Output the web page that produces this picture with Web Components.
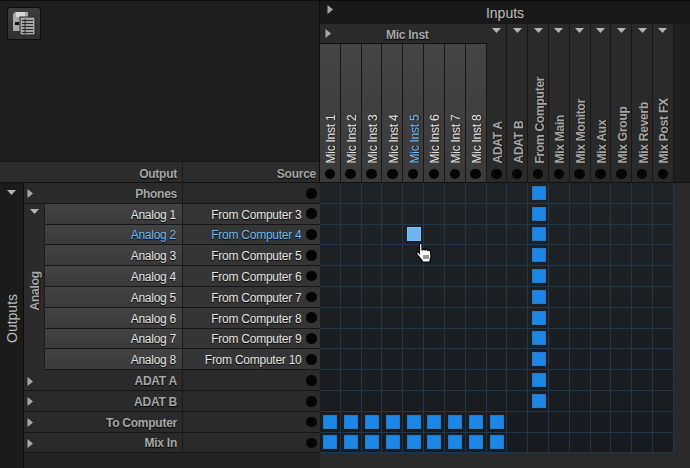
<!DOCTYPE html>
<html>
<head>
<meta charset="utf-8">
<title>Routing Matrix</title>
<style>
  html, body { margin: 0; padding: 0; background: #2a2a2a; overflow: hidden; }
  body { font-family: "Liberation Sans", Arial, sans-serif; }
</style>
</head>
<body>
<routing-matrix></routing-matrix>
<script>
function mkTmplt(innerHtml) {
    var tmplt = document.createElement("template");
    tmplt.innerHTML = innerHtml;
    return tmplt;
}

const TRI_RIGHT = `<svg width="6" height="9" viewBox="0 0 6 9"><path d="M.5 0 6 4.5.5 9z" fill="#a8a8a8"/></svg>`;
const TRI_DOWN = `<svg width="9" height="5" viewBox="0 0 9 5"><path d="M0 0h9L4.5 5z" fill="#b4b4b4"/></svg>`;

class PresetButton extends HTMLElement {
    constructor() {
        super();
        this.attachShadow({ mode: "open" }).append(PresetButton._tmplt.content.cloneNode(true));
    }
}
PresetButton._tmplt = mkTmplt(`
    <style>
        :host { display: flex; width: 34px; height: 33px; box-sizing: border-box; align-items: center; justify-content: center;
            background: linear-gradient(#3e3e3e, #303030); border: 1px solid #0c0c0c; border-radius: 3px; }
    </style>
    <svg width="24" height="25" viewBox="0 0 24 25">
        <path d="M1 3.500 3 1h13v5H8v14H1z" fill="#a9a9a9"/>
        <rect x="4" y="1" width="9" height="5" fill="#d8d8d8"/>
        <rect x="3" y="11" width="4" height="3" fill="#111"/>
        <rect x="8" y="6" width="15" height="18" fill="#a5a5a5" stroke="#222" stroke-width="1"/>
        <path d="M10 9.500h11M10 12.500h11M10 15.500h11M10 18.500h11M10 21.500h11M13 8v15" stroke="#2a2a2a" stroke-width="1" fill="none"/>
    </svg>
`);

class CornerPanel extends HTMLElement {
    constructor() {
        super();
        this.attachShadow({ mode: "open" }).append(CornerPanel._tmplt.content.cloneNode(true));
    }
}
CornerPanel._tmplt = mkTmplt(`
    <style>
        :host { display: flex; flex-direction: column; height: 183px; border-right: 1px solid #0e0e0e; box-sizing: border-box; background: #1f1f1f; }
        #top { height: 162px; box-sizing: border-box; padding: 7px; border-bottom: 1px solid #161616; box-shadow: inset 0 1px #0c0c0c; }
        #heads { display: flex; height: 21px; box-sizing: border-box; background: #2c2c2c; border-bottom: 1px solid #121212;
            font: bold 12px "Liberation Sans", Arial, sans-serif; letter-spacing: -0.25px; color: #a6a6a6; text-shadow: 0 1px 1px #000; }
        #heads div { display: flex; align-items: center; justify-content: flex-end; box-sizing: border-box; padding-top: 3px; }
        #out { width: 183px; padding-right: 5px; border-right: 1px solid #1a1a1a; }
        #src { flex: 1; padding-right: 3px; }
    </style>
    <div id="top"><preset-button></preset-button></div>
    <div id="heads"><div id="out">Output</div><div id="src">Source</div></div>
`);

class InputColumn extends HTMLElement {
    constructor() {
        super();
        this.attachShadow({ mode: "open" }).append(InputColumn._tmplt.content.cloneNode(true));
        this.shadowRoot.querySelector("#arrow").innerHTML = this.hasAttribute("group") ? TRI_DOWN : "";
    }
}
InputColumn._tmplt = mkTmplt(`
    <style>
        :host { display: flex; flex-direction: column; align-items: center; width: 20.82px; box-sizing: border-box; height: 100%;
            background: linear-gradient(#454545, #3a3a3a); border-right: 1px solid #161616; color: #e6e6e6;
            font: 12px "Liberation Sans", Arial, sans-serif; letter-spacing: -0.25px; text-shadow: 0 1px 1px #000; }
        :host([group]) { background: #2a2a2a; color: #a8a8a8; font-weight: bold; }
        :host([active]) { color: #72bcf8; }
        #arrow { height: 9px; padding-top: 4px; line-height: 0; flex: none; }
        #label { flex: 1; min-height: 0; display: flex; align-items: center; justify-content: flex-start; writing-mode: vertical-rl;
            transform: translateX(1.5px) rotate(180deg); white-space: nowrap; padding-top: 5px; line-height: 19px; }
        #dot { width: 10.5px; height: 10.5px; border-radius: 50%; background: #050505; margin: 0 0 3px; flex: none; }
    </style>
    <div id="arrow"></div>
    <div id="label"><slot></slot></div>
    <div id="dot"></div>
`);

class InputsHeader extends HTMLElement {
    constructor() {
        super();
        this.attachShadow({ mode: "open" }).append(InputsHeader._tmplt.content.cloneNode(true));
        this.shadowRoot.querySelectorAll(".tri").forEach(t => { t.innerHTML = TRI_RIGHT; });
    }
}
InputsHeader._tmplt = mkTmplt(`
    <style>
        :host { display: flex; flex-direction: column; height: 183px; background: #1f1f1f; box-sizing: border-box; border-bottom: 1px solid #111; }
        #title { position: relative; height: 24px; flex: none; display: flex; align-items: center; justify-content: center; background: #191919;
            color: #bdbdbd; font: 14px "Liberation Sans", Arial, sans-serif; box-sizing: border-box; padding-top: 2px; box-shadow: inset 0 1px #0c0c0c; }
        .tri { line-height: 0; }
        #title .tri { position: absolute; left: 7px; top: 5px; }
        #cols { flex: 1; min-height: 0; display: flex; }
        #mic { display: flex; flex-direction: column; flex: none; }
        #micHead { height: 20px; flex: none; display: flex; align-items: center; background: #2a2a2a; border-bottom: 1px solid #111;
            color: #a8a8a8; font: bold 12px "Liberation Sans", Arial, sans-serif; letter-spacing: -0.25px; position: relative; justify-content: center; box-sizing: border-box;
            padding: 2px 0 0 8px; text-shadow: 0 1px 1px #000; }
        #micHead .tri { position: absolute; left: 5px; top: 5px; }
        #micCols { flex: 1; min-height: 0; display: flex; }
        #rest { display: flex; flex: none; }
    </style>
    <div id="title"><span class="tri"></span><span>Inputs</span></div>
    <div id="cols">
        <div id="mic">
            <div id="micHead"><span class="tri"></span>Mic Inst</div>
            <div id="micCols"><slot name="mic"></slot></div>
        </div>
        <div id="rest"><slot name="rest"></slot></div>
    </div>
`);

class OutputRow extends HTMLElement {
    constructor() {
        super();
        this.attachShadow({ mode: "open" }).append(OutputRow._tmplt.content.cloneNode(true));
        const s = this.shadowRoot;
        s.querySelector("#name").textContent = this.getAttribute("name");
        s.querySelector("#source").textContent = this.getAttribute("source") || "";
        if (this.hasAttribute("group")) {
            s.querySelector("#arrow").innerHTML = TRI_RIGHT;
        } else {
            s.querySelector("#arrow").remove();
        }
    }
}
OutputRow._tmplt = mkTmplt(`
    <style>
        :host { display: flex; height: 20.8px; box-sizing: border-box; color: #e6e6e6; font: 12px "Liberation Sans", Arial, sans-serif;
            letter-spacing: -0.25px; text-shadow: 0 1px 1px #000; border-bottom: 1px solid #161616; background: #353535; }
        :host([group]) { background: #2a2a2a; color: #a8a8a8; font-weight: bold; }
        :host([active]) { color: #72bcf8; }
        #nameCell { display: flex; align-items: center; flex: 1; min-width: 0; box-sizing: border-box; padding-right: 6px;
            background: linear-gradient(#434343, #3a3a3a); border-right: 1px solid #1a1a1a; }
        :host([group]) #nameCell { background: #2a2a2a; padding-right: 5px; }
        #arrow { line-height: 0; margin-left: 3px; padding-top: 2px; }
        #name { margin-left: auto; padding-top: 2px; }
        #srcCell { display: flex; align-items: center; justify-content: flex-end; width: 137px; flex: none; box-sizing: border-box; padding-right: 3.500px; }
        :host([group]) #srcCell { padding-top: 1px; }
        #source { margin-right: 4.500px; padding-top: 2px; }
        #dot { width: 10.5px; height: 10.5px; border-radius: 50%; background: #050505; flex: none; }
    </style>
    <div id="nameCell"><span id="arrow"></span><span id="name"></span></div>
    <div id="srcCell"><span id="source"></span><span id="dot"></span></div>
`);

class OutputGroup extends HTMLElement {
    constructor() {
        super();
        this.attachShadow({ mode: "open" }).append(OutputGroup._tmplt.content.cloneNode(true));
        this.shadowRoot.querySelector("#arrow").innerHTML = TRI_DOWN;
    }
}
OutputGroup._tmplt = mkTmplt(`
    <style>
        :host { display: flex; }
        #side { width: 21px; flex: none; box-sizing: border-box; background: #2b2b2b; display: flex; flex-direction: column; align-items: center; border-right: 1px solid #1c1c1c; }
        #arrow { height: 9px; padding-top: 5px; line-height: 0; flex: none; }
        #label { flex: 1; display: flex; align-items: center; justify-content: center; writing-mode: vertical-rl; transform: translateX(1px) rotate(180deg);
            color: #a8a8a8; font: bold 12px "Liberation Sans", Arial, sans-serif; letter-spacing: -0.25px; text-shadow: 0 1px 1px #000; padding-top: 7px; }
        #rows { flex: 1; min-width: 0; }
    </style>
    <div id="side"><div id="arrow"></div><div id="label">Analog</div></div>
    <div id="rows"><slot></slot></div>
`);

class OutputsPanel extends HTMLElement {
    constructor() {
        super();
        this.attachShadow({ mode: "open" }).append(OutputsPanel._tmplt.content.cloneNode(true));
        this.shadowRoot.querySelector("#arrow").innerHTML = TRI_DOWN;
    }
}
OutputsPanel._tmplt = mkTmplt(`
    <style>
        :host { display: flex; height: 285px; background: #232323; }
        #side { width: 24px; flex: none; box-sizing: border-box; background: #1b1b1b; border-right: 1px solid #0c0c0c; display: flex; flex-direction: column; align-items: center; }
        #arrow { height: 9px; padding: 7px 1px 0 0; line-height: 0; flex: none; }
        #label { flex: 1; display: flex; align-items: center; justify-content: center; writing-mode: vertical-rl; transform: rotate(180deg);
            color: #bdbdbd; font: 14px "Liberation Sans", Arial, sans-serif; padding-top: 30px; }
        #rows { flex: 1; min-width: 0; }
    </style>
    <div id="side"><div id="arrow"></div><div id="label">Outputs</div></div>
    <div id="rows"><slot></slot></div>
`);

class MatrixCell extends HTMLElement {
    constructor() {
        super();
        this.attachShadow({ mode: "open" }).append(MatrixCell._tmplt.content.cloneNode(true));
    }
}
MatrixCell._tmplt = mkTmplt(`
    <style>
        :host { display: flex; align-items: center; justify-content: center; box-sizing: border-box; border-right: 1px solid #1f384e; border-bottom: 1px solid #1f384e; }
        #sq { display: none; width: 14px; height: 14px; box-sizing: border-box; background: #1c87e6; border: 1px solid #2a78c0; box-shadow: 0 0 0 1px #14202c; margin: 0 0 0 1px; }
        :host([on]) #sq { display: block; }
        :host([hot]) #sq { display: block; background: #6fb4ef; border-color: #80bdf0; }
    </style>
    <div id="sq"></div>
`);

class MatrixGrid extends HTMLElement {
    constructor() {
        super();
        this.attachShadow({ mode: "open" }).append(MatrixGrid._tmplt.content.cloneNode(true));
        const grid = this.shadowRoot.querySelector("#grid");
        for (let r = 0; r < 13; r++) {
            for (let c = 0; c < 17; c++) {
                const cell = document.createElement("matrix-cell");
                if (c === 10 && r <= 10) cell.setAttribute("on", "");
                if (r >= 11 && c <= 8) cell.setAttribute("on", "");
                if (r === 2 && c === 4) cell.setAttribute("hot", "");
                grid.append(cell);
            }
        }
    }
}
MatrixGrid._tmplt = mkTmplt(`
    <style>
        :host { display: block; position: relative; width: 354px; height: 270.4px; }
        #grid { display: grid; grid-template-columns: repeat(17, 20.82px); grid-auto-rows: 20.8px;
            background: linear-gradient(#1f2326, #171a1e); }
        #hand { position: absolute; left: 95px; top: 59px; }
    </style>
    <div id="grid"></div>
    <svg id="hand" width="18" height="21" viewBox="0 0 17 21">
        <path d="M4 2.200C4 .7 6.500 .7 6.500 2.200V8h.5c.5-1.200 2.500-1.200 2.800 0 .7-1 2.200-.8 2.600.5.800-.7 2.400-.3 2.600 1l.5 4.500c0 2-.5 3-1 4v2H6.500v-1.500C5 17 3 14 1.200 12c-.8-1.200.6-2.600 1.800-1.600l1 1.100z" fill="#fff" stroke="#000" stroke-width="1.200"/>
        <path d="M8.500 13v4M10.500 13v4M12.500 13v4" stroke="#333" stroke-width="1" fill="none"/>
    </svg>
`);

class RoutingMatrix extends HTMLElement {
    constructor() {
        super();
        this.attachShadow({ mode: "open" }).append(RoutingMatrix._tmplt.content.cloneNode(true));
    }
}
RoutingMatrix._tmplt = mkTmplt(`
    <style>
        :host { display: grid; grid-template-columns: 320px 370px; grid-template-rows: 183px 285px; width: 690px; height: 468px; overflow: hidden; background: #2a2a2a; }
    </style>
    <corner-panel></corner-panel>
    <inputs-header>
        <input-column slot="mic">Mic Inst 1</input-column>
        <input-column slot="mic">Mic Inst 2</input-column>
        <input-column slot="mic">Mic Inst 3</input-column>
        <input-column slot="mic">Mic Inst 4</input-column>
        <input-column slot="mic" active>Mic Inst 5</input-column>
        <input-column slot="mic">Mic Inst 6</input-column>
        <input-column slot="mic">Mic Inst 7</input-column>
        <input-column slot="mic">Mic Inst 8</input-column>
        <input-column slot="rest" group>ADAT A</input-column>
        <input-column slot="rest" group>ADAT B</input-column>
        <input-column slot="rest" group>From Computer</input-column>
        <input-column slot="rest" group>Mix Main</input-column>
        <input-column slot="rest" group>Mix Monitor</input-column>
        <input-column slot="rest" group>Mix Aux</input-column>
        <input-column slot="rest" group>Mix Group</input-column>
        <input-column slot="rest" group>Mix Reverb</input-column>
        <input-column slot="rest" group>Mix Post FX</input-column>
    </inputs-header>
    <outputs-panel>
        <output-row group name="Phones"></output-row>
        <output-group>
            <output-row name="Analog 1" source="From Computer 3"></output-row>
            <output-row name="Analog 2" source="From Computer 4" active></output-row>
            <output-row name="Analog 3" source="From Computer 5"></output-row>
            <output-row name="Analog 4" source="From Computer 6"></output-row>
            <output-row name="Analog 5" source="From Computer 7"></output-row>
            <output-row name="Analog 6" source="From Computer 8"></output-row>
            <output-row name="Analog 7" source="From Computer 9"></output-row>
            <output-row name="Analog 8" source="From Computer 10"></output-row>
        </output-group>
        <output-row group name="ADAT A"></output-row>
        <output-row group name="ADAT B"></output-row>
        <output-row group name="To Computer"></output-row>
        <output-row group name="Mix In"></output-row>
    </outputs-panel>
    <matrix-grid></matrix-grid>
`);

customElements.define("preset-button", PresetButton);
customElements.define("corner-panel", CornerPanel);
customElements.define("input-column", InputColumn);
customElements.define("inputs-header", InputsHeader);
customElements.define("output-row", OutputRow);
customElements.define("output-group", OutputGroup);
customElements.define("outputs-panel", OutputsPanel);
customElements.define("matrix-cell", MatrixCell);
customElements.define("matrix-grid", MatrixGrid);
customElements.define("routing-matrix", RoutingMatrix);
</script>
</body>
</html>
